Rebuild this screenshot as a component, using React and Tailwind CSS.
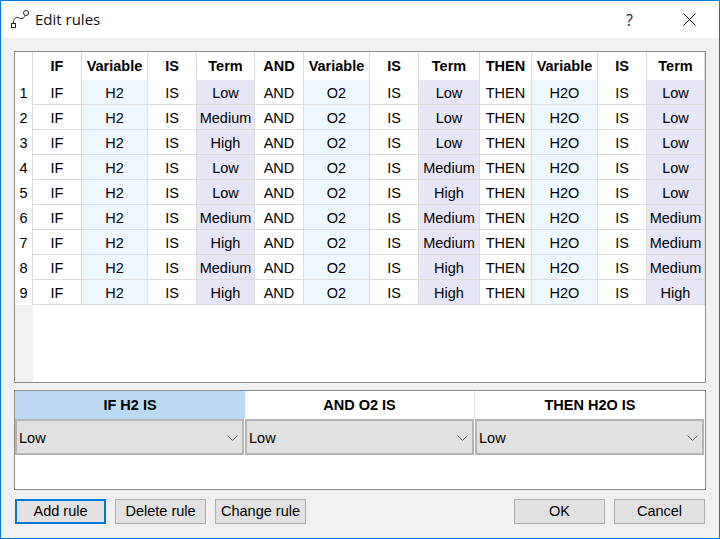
import React from "react";

const cols = "grid-cols-[18px_49px_66px_49px_58px_49px_66px_49px_61px_52px_66px_49px_58px]";
const heads = ["IF", "Variable", "IS", "Term", "AND", "Variable", "IS", "Term", "THEN", "Variable", "IS", "Term"];
const L = "Low", M = "Medium", H = "High";
const rows = [
  [L, L, L],
  [M, L, L],
  [H, L, L],
  [L, M, L],
  [L, H, L],
  [M, M, M],
  [H, M, M],
  [M, H, M],
  [H, H, H],
];

function Cell({ children, kind }) {
  const bg = kind === "var" ? "bg-[#eef6fe]" : kind === "term" ? "bg-[#e6e6f7]" : "bg-white";
  return (
    <div className={`${bg} h-[25px] border-r border-b border-[#dcdcdc] flex items-center justify-center pt-[1px]`}>
      {children}
    </div>
  );
}

function Combo({ className }) {
  return (
    <div className={`h-[36px] bg-[#e1e1e1] border-2 border-[#b4b4b4] flex items-center justify-between pr-[4px] pt-[1px] ${className}`}>
      <span>Low</span>
      <svg width="11" height="6" viewBox="0 0 11 6" fill="none" stroke="#6a6a6a" strokeWidth="1">
        <path d="M0.5 0.5 L5.5 5.5 L10.5 0.5" />
      </svg>
    </div>
  );
}

function Btn({ children, primary }) {
  return (
    <button className={`w-[91px] h-[25px] bg-[#e1e1e1] text-[#000] flex items-center justify-center pb-[1px] ${primary ? "border-2 border-[#0078d7]" : "border border-[#adadad]"}`}>
      {children}
    </button>
  );
}

export default function App() {
  return (
    <div className="w-[720px] h-[539px] bg-[#f0f0f0] border border-[#0078d7] flex flex-col text-[14.5px] leading-[16px] text-black font-['Liberation_Sans',Arial,sans-serif] overflow-hidden">
      <div className="h-[37px] bg-white flex items-center shrink-0">
        <svg className="ml-[9px] mr-[5px] mb-[2px]" width="20" height="20" viewBox="0 0 20 20" fill="none" stroke="#222" strokeWidth="1">
          <rect x="1.5" y="14.5" width="4" height="4" />
          <circle cx="16" cy="4" r="2.5" />
          <path d="M3.5 14 C3.5 10 5 8.5 7 8.5 C9 8.5 10 10 12 9.5 C14 9 14.5 8 15 6.5" />
        </svg>
        <span className="font-['Open_Sans',sans-serif] text-[15px] text-[#111] mb-[2px]">Edit rules</span>
        <span className="ml-auto mr-[50px] font-['Open_Sans',sans-serif] text-[16px] text-[#222]">?</span>
        <svg className="mr-[23px]" width="13" height="13" viewBox="0 0 13 13" stroke="#111" strokeWidth="1">
          <path d="M0.5 0.5 L12.5 12.5 M12.5 0.5 L0.5 12.5" />
        </svg>
      </div>

      <div className="flex-1 flex flex-col pl-[13px] pr-[13px] pt-[13px]">
        <div className="w-[692px] h-[332px] border border-[#8c8c8c] bg-white flex flex-col shrink-0 relative">
          <div className={`grid ${cols} h-[28px] font-bold`}>
            <div className="bg-white border-r border-[#dcdcdc]" />
            {heads.map((h, i) => (
              <div key={i} className="bg-white border-r border-[#dcdcdc] flex items-center justify-center">{h}</div>
            ))}
          </div>
          <div className="flex-1 flex flex-col">
            {rows.map((r, i) => (
              <div key={i} className={`grid ${cols}`}>
                <div className="h-[25px] bg-white border-r border-[#dcdcdc] flex items-center justify-center pt-[1px]">{i + 1}</div>
                <Cell>IF</Cell>
                <Cell kind="var">H2</Cell>
                <Cell>IS</Cell>
                <Cell kind="term">{r[0]}</Cell>
                <Cell>AND</Cell>
                <Cell kind="var">O2</Cell>
                <Cell>IS</Cell>
                <Cell kind="term">{r[1]}</Cell>
                <Cell>THEN</Cell>
                <Cell kind="var">H2O</Cell>
                <Cell>IS</Cell>
                <Cell kind="term">{r[2]}</Cell>
              </div>
            ))}
            <div className="flex-1 w-[18px] bg-[#f0f0f0]" />
          </div>
        </div>

        <div className="w-[692px] h-[100px] mt-[7px] border border-[#8c8c8c] bg-white shrink-0">
          <div className="grid grid-cols-[230px_230px_230px] h-[28px] font-bold">
            <div className="bg-[#bbdaf2] flex items-center justify-center">IF H2 IS</div>
            <div className="bg-white border-r border-[#e3e3e3] flex items-center justify-center">AND O2 IS</div>
            <div className="bg-white flex items-center justify-center">THEN H2O IS</div>
          </div>
          <div className="grid grid-cols-[230px_230px_230px]">
            <Combo className="mr-[1px] pl-[2px]" />
            <Combo className="mr-[1px] pl-[2px]" />
            <Combo className="mr-[1px] pl-[2px]" />
          </div>
        </div>

        <div className="flex mt-[9px] pl-[1px] pr-[1px] gap-[9px]">
          <Btn primary>Add rule</Btn>
          <Btn>Delete rule</Btn>
          <Btn>Change rule</Btn>
          <div className="flex-1 flex justify-end gap-[9px]">
            <Btn>OK</Btn>
            <Btn>Cancel</Btn>
          </div>
        </div>
      </div>
    </div>
  );
}
